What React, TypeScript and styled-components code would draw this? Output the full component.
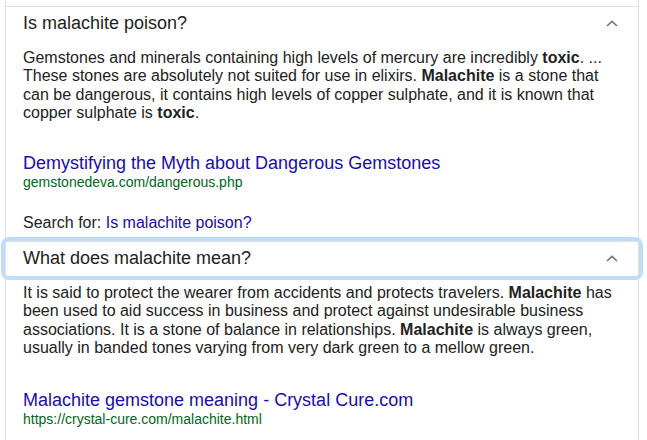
import React from "react";
import styled, { createGlobalStyle } from "styled-components";

const GlobalStyle = createGlobalStyle`
  html, body {
    margin: 0;
    padding: 0;
    background: #fff;
  }
  body {
    font-family: "Liberation Sans", Arial, sans-serif;
    color: #222;
    overflow: hidden;
  }
`;

const Panel = styled.div`
  width: 632px;
  height: 440px;
  margin-left: 5px;
  border-left: 1px solid #dfdfdf;
  border-right: 1px solid #dfdfdf;
`;

const PrevItem = styled.div`
  height: 6px;
  border-bottom: 1px solid #dfdfdf;
`;

const Item = styled.div<{ $last?: boolean }>`
  border-bottom: ${(p) => (p.$last ? "none" : "1px solid #dfdfdf")};
`;

const Header = styled.div<{ $focused?: boolean }>`
  display: flex;
  align-items: center;
  justify-content: space-between;
  height: 33px;
  padding: 0 20px 0 17px;
  font-size: 18px;
  color: #222;
  border-radius: 3px;
  outline: ${(p) => (p.$focused ? "4px solid #c0ddf7" : "none")};
  outline-offset: 1px;
`;

const Body = styled.div`
  padding: 9px 18px 9px 17px;
`;

const Snippet = styled.p`
  margin: 0;
  font-size: 16px;
  line-height: 18.4px;
  color: #222;
  b {
    font-weight: bold;
  }
`;

const Result = styled.div<{ $gap: number }>`
  margin-top: ${(p) => p.$gap}px;
`;

const Title = styled.a`
  display: block;
  font-size: 18px;
  line-height: 20px;
  color: #1a0dab;
  text-decoration: none;
`;

const Url = styled.div`
  font-size: 14px;
  line-height: 18px;
  color: #006621;
`;

const SearchFor = styled.div`
  margin-top: 23px;
  font-size: 16px;
  line-height: 18.4px;
  color: #222;
  a {
    color: #1a0dab;
    text-decoration: none;
  }
`;

function Chevron() {
  return (
    <svg width="12" height="7" viewBox="0 0 12 7">
      <path d="M1 6 L6 1.3 L11 6" fill="none" stroke="#757575" strokeWidth="1.7" />
    </svg>
  );
}

export default function App() {
  return (
    <>
      <GlobalStyle />
      <Panel>
        <PrevItem />
        <Item>
          <Header>
            <span>Is malachite poison?</span>
            <Chevron />
          </Header>
          <Body>
            <Snippet>
              Gemstones and minerals containing high levels of mercury are incredibly <b>toxic</b>. ...
              These stones are absolutely not suited for use in elixirs. <b>Malachite</b> is a stone that
              can be dangerous, it contains high levels of copper sulphate, and it is known that copper
              sulphate is <b>toxic</b>.
            </Snippet>
            <Result $gap={30}>
              <Title href="#">Demystifying the Myth about Dangerous Gemstones</Title>
              <Url>gemstonedeva.com/dangerous.php</Url>
            </Result>
            <SearchFor>
              Search for: <a href="#">Is malachite poison?</a>
            </SearchFor>
          </Body>
        </Item>
        <Item $last>
          <Header $focused>
            <span>What does malachite mean?</span>
            <Chevron />
          </Header>
          <Body>
            <Snippet>
              It is said to protect the wearer from accidents and protects travelers. <b>Malachite</b> has
              been used to aid success in business and protect against undesirable business
              associations. It is a stone of balance in relationships. <b>Malachite</b> is always green,
              usually in banded tones varying from very dark green to a mellow green.
            </Snippet>
            <Result $gap={32}>
              <Title href="#">Malachite gemstone meaning - Crystal Cure.com</Title>
              <Url>https://crystal-cure.com/malachite.html</Url>
            </Result>
          </Body>
        </Item>
      </Panel>
    </>
  );
}
